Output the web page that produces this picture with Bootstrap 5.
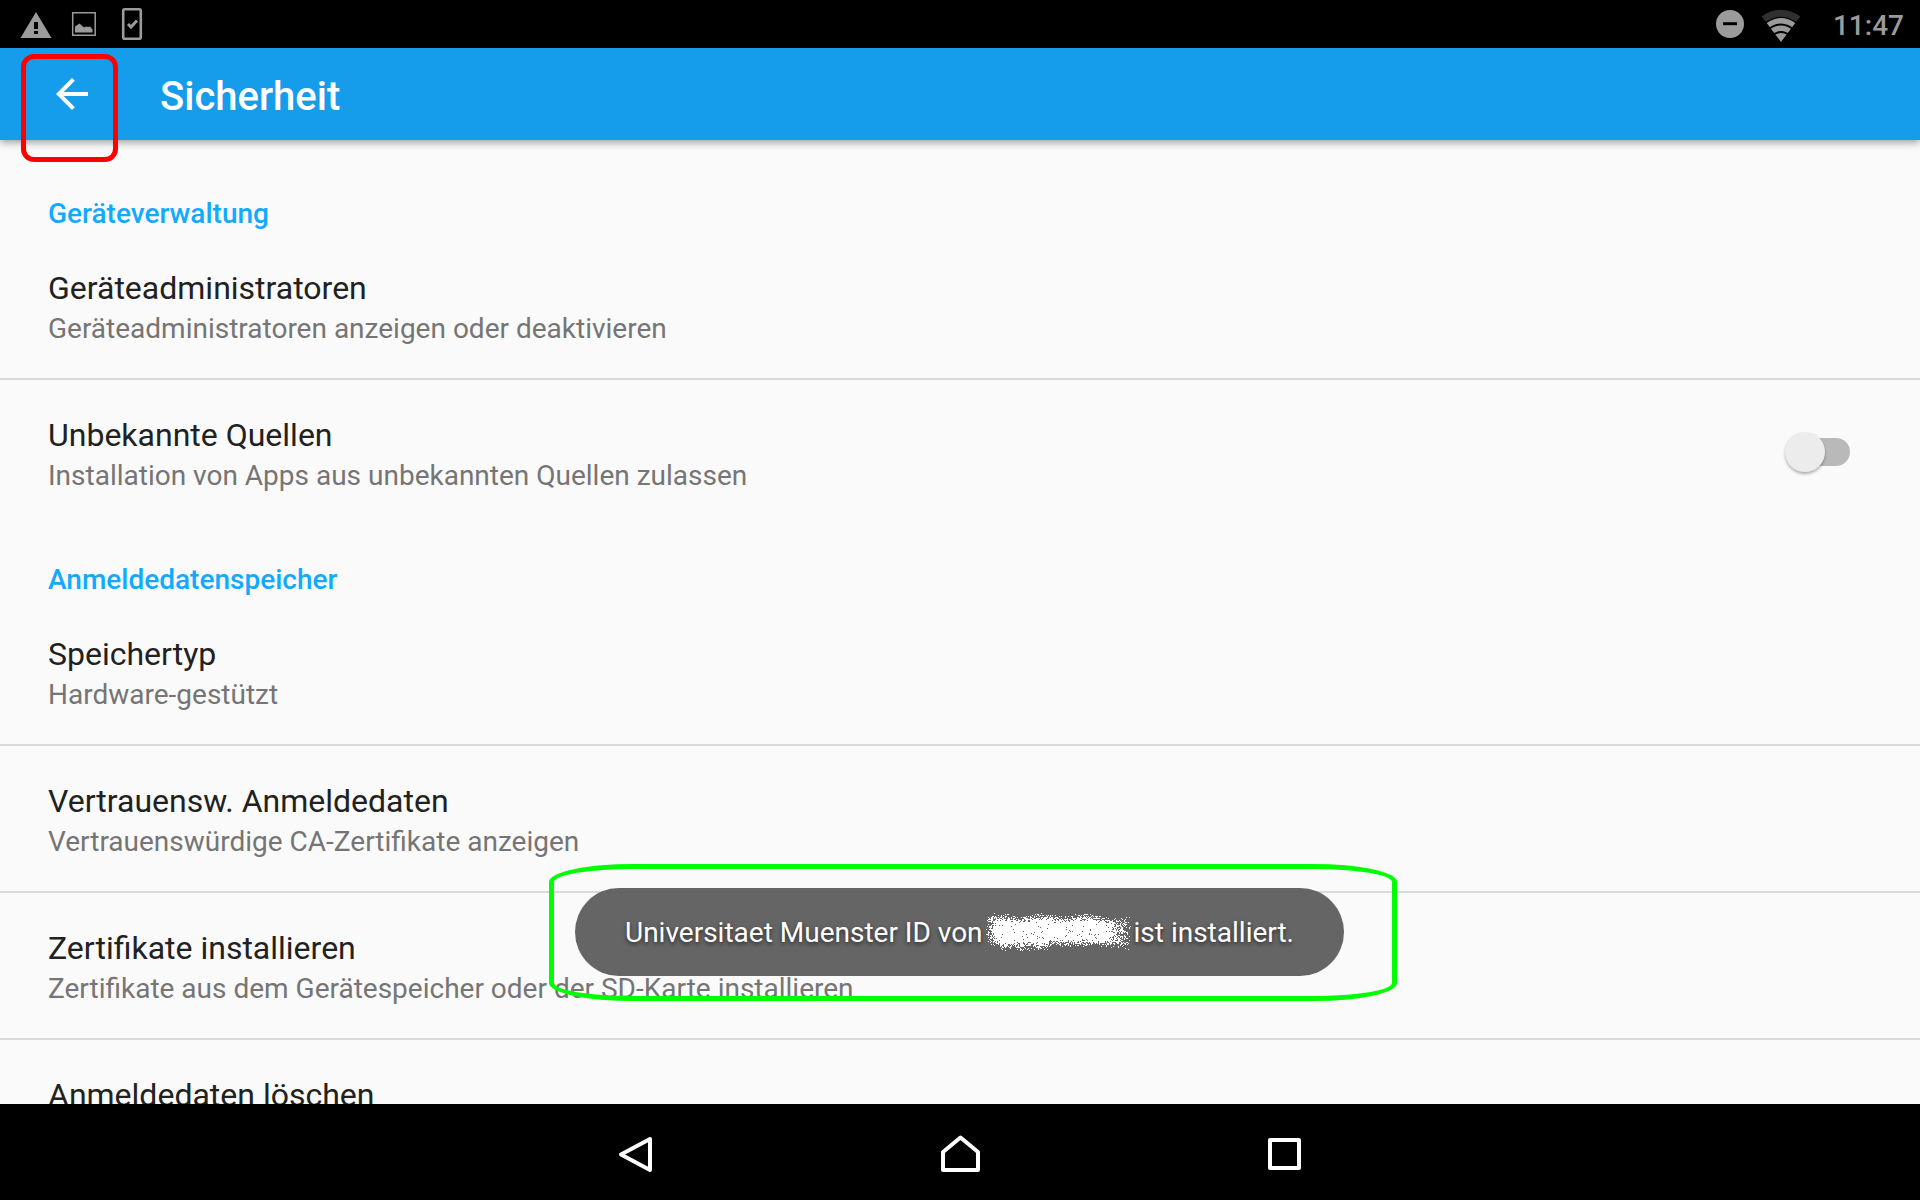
<!DOCTYPE html>
<html lang="de">
<head>
<meta charset="utf-8">
<meta name="viewport" content="width=device-width, initial-scale=1">
<title>Sicherheit</title>
<link href="https://cdn.jsdelivr.net/npm/bootstrap@5.3.0/dist/css/bootstrap.min.css" rel="stylesheet">
<style>
body { font-family: Roboto, "Noto Sans", sans-serif; background: #fafafa; color: #212121; }
.status-bar { height: 48px; background: #000; color: #9b9b9b; font-size: 28px; font-weight: 500; padding: 0 16px 0 20px; }
.status-bar svg { display: block; }
.status-clock { padding-left: 31px; line-height: 46px; padding-top: 3px; }
.app-bar { height: 92px; background: #159ceb; box-shadow: 0 2px 8px rgba(0,0,0,.42); z-index: 2; }
.back-btn { width: 48px; height: 48px; margin-left: 48px; }
.back-btn svg { display: block; }
.app-title { font-size: 40px; line-height: 48px; font-weight: 500; color: #fff; margin: 6px 0 0 64px; }
.settings-pane { padding-top: 19px; min-height: 0; }
.section-title { font-size: 28px; line-height: 33px; font-weight: 500; color: #12aaff; padding: 38px 48px 3px; margin: 0; }
.setting { padding: 34px 70px 29px 48px; }
.setting-link { color: inherit; text-decoration: none; }
.divided { border-bottom: 2px solid #dadada; }
.setting-name { display: block; font-size: 32px; line-height: 42px; }
.setting-info { display: block; font-size: 28px; line-height: 40px; color: #757575; }
.form-check-input.knob-switch { width: 65px; height: 40px; margin: 0 0 2px; border: 0; border-radius: 20px; background: none; position: relative; }
.knob-switch::before { content: ""; position: absolute; left: 10px; right: 0; top: 6px; height: 28px; border-radius: 14px; background: #b9b9b9; }
.knob-switch::after { content: ""; position: absolute; left: 0; top: 0; width: 40px; height: 40px; border-radius: 50%; background: #ececec; box-shadow: 0 2px 3px rgba(0,0,0,.3); }
.nav-keys { height: 96px; background: #000; z-index: 2; }
.nav-key { width: 324px; }
.nav-key svg { display: block; margin: 4px auto 0; }
.frame-red { position: absolute; left: 21px; top: 54px; width: 97px; height: 108px; border: 5px solid #f00; border-radius: 13px; z-index: 5; pointer-events: none; }
.toast-holder { position: absolute; bottom: 224px; left: 0; right: 0; z-index: 4; pointer-events: none; }
.toast-pill { width: 769px; height: 88px; margin-right: 1px; border-radius: 44px; background: rgba(93,93,93,.95); color: #fff; padding: 2px 50px 0; font-size: 28px; white-space: nowrap; text-shadow: 0 2px 4px rgba(0,0,0,.6); }
.frame-green { position: absolute; inset: -24px -53px -25px -26px; border: 5px solid #0f0; border-radius: 84px / 18px; }
.scribble { overflow: visible; }
</style>
</head>
<body class="vh-100 overflow-hidden d-flex flex-column position-relative">
<header class="status-bar d-flex align-items-center justify-content-between flex-shrink-0">
  <div class="d-flex align-items-center">
    <svg width="132" height="48" viewBox="20 0 132 48" fill="#9b9b9b" aria-hidden="true">
      <path d="M36 12 51.500 38H20.500Z"/>
      <path fill="#000" d="M34 22h4v7h-4zM34 31h4v3h-4z"/>
      <path fill="none" stroke="#9b9b9b" stroke-width="1.500" d="M72.700 12.700h22.500v22.500H72.700z"/>
      <path d="M75 32.500v-6l4.500-3 4.500 4 2-1 2 .5 2-.500 2.500 3v3z"/>
      <rect x="123.200" y="9.200" width="17.600" height="29.600" rx="1.500" fill="none" stroke="#9b9b9b" stroke-width="2.600"/>
      <path fill="none" stroke="#9b9b9b" stroke-width="3" d="m128 24 3 3 6-6.500"/>
    </svg>
  </div>
  <div class="d-flex align-items-center">
    <svg width="86" height="48" viewBox="1716 0 86 48" fill="#9b9b9b" aria-hidden="true">
      <circle cx="1730" cy="24" r="14"/><path fill="#000" d="M1723 22.200h14v3h-14z"/>
      <path fill="#303030" d="M1761.500 16.500Q1781 3 1800.500 16.500L1796 21.800Q1781 11.500 1766 21.800Z"/>
      <path d="M1766.700 23Q1781 13 1795.300 23L1781 42Z"/>
      <path fill="none" stroke="#000" stroke-width="2" d="M1767 30.500Q1781 18.500 1795 30.500M1771 36.500Q1781 27.500 1791 36.500"/>
    </svg>
    <time class="status-clock">11:47</time>
  </div>
</header>
<div class="app-bar d-flex align-items-center flex-shrink-0 position-relative">
  <button type="button" class="back-btn btn p-0 border-0" aria-label="Zurück">
    <svg width="48" height="48" viewBox="0 0 24 24" fill="#fff"><path d="M20 11H7.830l5.590-5.590L12 4l-8 8 8 8 1.410-1.410L7.830 13H20v-2z"/></svg>
  </button>
  <h1 class="app-title">Sicherheit</h1>
</div>
<main class="settings-pane flex-grow-1 overflow-hidden">
  <h2 class="section-title">Geräteverwaltung</h2>
  <a href="#" class="setting setting-link divided d-block"><span class="setting-name">Geräteadministratoren</span><span class="setting-info">Geräteadministratoren anzeigen oder deaktivieren</span></a>
  <div class="setting d-flex align-items-center justify-content-between py-0">
    <label for="unknown-sources" class="setting px-0"><span class="setting-name">Unbekannte Quellen</span><span class="setting-info">Installation von Apps aus unbekannten Quellen zulassen</span></label>
    <input class="form-check-input knob-switch" type="checkbox" role="switch" id="unknown-sources">
  </div>
  <h2 class="section-title">Anmeldedatenspeicher</h2>
  <a href="#" class="setting setting-link divided d-block"><span class="setting-name">Speichertyp</span><span class="setting-info">Hardware-gestützt</span></a>
  <a href="#" class="setting setting-link divided d-block"><span class="setting-name">Vertrauensw. Anmeldedaten</span><span class="setting-info">Vertrauenswürdige CA-Zertifikate anzeigen</span></a>
  <a href="#" class="setting setting-link divided d-block"><span class="setting-name">Zertifikate installieren</span><span class="setting-info">Zertifikate aus dem Gerätespeicher oder der SD-Karte installieren</span></a>
  <a href="#" class="setting setting-link d-block"><span class="setting-name">Anmeldedaten löschen</span></a>
</main>
<nav class="nav-keys d-flex justify-content-center flex-shrink-0" aria-label="Navigation">
  <button type="button" class="nav-key btn p-0 border-0" aria-label="Zurück"><svg width="48" height="48" viewBox="0 0 48 48" fill="none" stroke="#fff" stroke-width="4" stroke-linejoin="round"><path d="M38 9v31L9 24.500z"/></svg></button>
  <button type="button" class="nav-key btn p-0 border-0" aria-label="Startseite"><svg width="48" height="48" viewBox="0 0 48 48" fill="none" stroke="#fff" stroke-width="4" stroke-linejoin="round"><path d="M7 40V22L24.500 7.500 42 22V40z"/></svg></button>
  <button type="button" class="nav-key btn p-0 border-0" aria-label="Übersicht"><svg width="48" height="48" viewBox="0 0 48 48" fill="none" stroke="#fff" stroke-width="4" stroke-linejoin="round"><path d="M10 10h29v28H10z"/></svg></button>
</nav>
<div class="frame-red"></div>
<div class="toast-holder d-flex justify-content-center">
  <div class="toast-pill position-relative d-flex align-items-center justify-content-between" role="status">
    <span>Universitaet Muenster ID von</span>
    <svg class="scribble" width="142" height="40" viewBox="0 0 142 40" fill="#fff" aria-hidden="true"><path id="spray"/></svg>
    <span>ist installiert.</span>
    <div class="frame-green"></div>
  </div>
</div>
<script src="https://cdn.jsdelivr.net/npm/bootstrap@5.3.0/dist/js/bootstrap.bundle.min.js"></script>
<script>
// Spray-paint strokes that hide the name: fine white dots, dense in the middle.
let seed = 7;
const rnd = () => (seed = (seed * 16807) % 2147483647) / 2147483647;
let d = '';
for (let x = -1; x < 144; x++) {
  const mid = 18 + (x > 110 ? (x - 110) * .1 : 0);
  const bump = 1.5 * Math.sin(x / 7);
  for (let y = -1; y < 40; y++) {
    const r = y < mid ? (mid - y) / (17 + bump) : (y - mid) / (x > 12 && x < 62 ? 19 : 15);
    const edge = Math.min(1, (x + 3) / 12, (146 - x) / 26);
    const p = Math.min(.97, Math.max(0, (1.02 - r) * 2.1)) * edge;
    if (rnd() < p) d += `M${x} ${y}h1v1h-1z`;
  }
}
document.getElementById('spray').setAttribute('d', d);
</script>
</body>
</html>
